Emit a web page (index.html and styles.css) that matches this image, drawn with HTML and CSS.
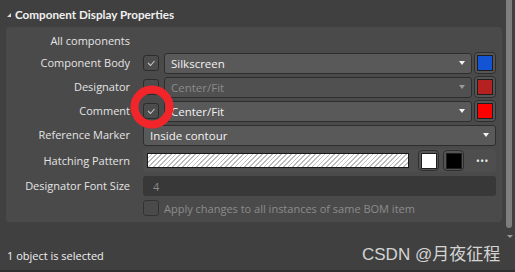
FILE: index.html
```html
<!DOCTYPE html>
<html lang="en">
<head>
    <meta charset="UTF-8">
    <title>Component Display Properties</title>
    <link rel="stylesheet" href="styles.css">
</head>
<body>
    <div class="window">
        <div class="main">
            <div class="content">
                <div class="section-title"><span class="caret"></span>Component Display Properties</div>
                <div class="panel">
                    <div class="label">All components</div>
                    <div></div>

                    <div class="label">Component Body</div>
                    <div class="controls">
                        <span class="check"><svg viewBox="0 0 14 14"><polyline points="4,7 6.5,9.5 10.5,5"/></svg></span>
                        <div class="select">Silkscreen<span class="arrow"></span></div>
                        <span class="swatch"><span class="fill blue"></span></span>
                    </div>

                    <div class="label">Designator</div>
                    <div class="controls">
                        <span class="check"></span>
                        <div class="select disabled">Center/Fit<span class="arrow"></span></div>
                        <span class="swatch"><span class="fill darkred"></span></span>
                    </div>

                    <div class="label">Comment</div>
                    <div class="controls">
                        <span class="check"><svg viewBox="0 0 14 14"><polyline points="4,7 6.5,9.5 10.5,5"/></svg></span>
                        <div class="select">Center/Fit<span class="arrow"></span></div>
                        <span class="swatch"><span class="fill red"></span></span>
                    </div>

                    <div class="label">Reference Marker</div>
                    <div class="controls">
                        <div class="select wide">Inside contour<span class="arrow"></span></div>
                    </div>

                    <div class="label">Hatching Pattern</div>
                    <div class="controls hatch-row">
                        <div class="hatch"></div>
                        <span class="swatch"><span class="fill white"></span></span>
                        <span class="swatch"><span class="fill black"></span></span>
                        <span class="dots">&bull;&bull;&bull;</span>
                    </div>

                    <div class="label">Designator Font Size</div>
                    <div class="controls">
                        <div class="input">4</div>
                    </div>

                    <div></div>
                    <div class="controls apply">
                        <span class="check"></span>
                        <span>Apply changes to all instances of same BOM item</span>
                    </div>
                </div>
            </div>
            <div class="scroll">
                <div class="thumb"></div>
                <div class="scroll-arrow"></div>
            </div>
        </div>
        <div class="status">1 object is selected</div>
        <div class="strip"></div>
        <svg class="highlight" viewBox="0 0 46 46"><circle cx="23" cy="23" r="17.5"/></svg>
        <div class="watermark">CSDN @月夜征程</div>
    </div>
</body>
</html>
```

FILE: styles.css
```css
body {
    margin: 0;
    background-color: #404040;
    font-family: "Open Sans", "Noto Sans", sans-serif;
    font-size: 11px;
    color: #e4e4e4;
}
.window {
    position: relative;
    width: 515px;
    height: 272px;
    display: flex;
    flex-direction: column;
    overflow: hidden;
}
.main {
    display: flex;
    height: 240px;
}
.content {
    flex: 1;
    padding-left: 6px;
}
.section-title {
    height: 27px;
    display: flex;
    align-items: center;
    font-family: "Lato", "Open Sans", sans-serif;
    font-weight: bold;
    font-size: 11.7px;
    color: #f0f0f0;
    margin-left: 1px;
}
.caret {
    width: 0;
    height: 0;
    border-left: 4px solid transparent;
    border-bottom: 4px solid #d8d8d8;
    margin-right: 4px;
    margin-top: 2px;
}
.panel {
    width: 496px;
    box-sizing: border-box;
    background-color: #4a4a4a;
    border-radius: 4px;
    padding: 6px 6px 6px 0;
    display: grid;
    grid-template-columns: 124px 1fr;
    column-gap: 13px;
    row-gap: 4px;
    align-items: center;
}
.label {
    text-align: right;
    white-space: nowrap;
    line-height: 16px;
}
.controls {
    display: flex;
    align-items: center;
    height: 20px;
}
.check {
    width: 14px;
    height: 14px;
    border: 1px solid #2c2c2c;
    border-radius: 3px;
    background-color: #4c4c4c;
    margin-right: 5px;
    flex: none;
    display: flex;
}
.check svg {
    width: 14px;
    height: 14px;
}
.check polyline {
    fill: none;
    stroke: #c8c8c8;
    stroke-width: 1.1;
}
.select {
    flex: 1;
    height: 19px;
    border: 1px solid #2e2e2e;
    border-radius: 3px;
    background-color: #595959;
    display: flex;
    align-items: center;
    padding-left: 6px;
    font-size: 11.5px;
    color: #f2f2f2;
}
.select.disabled {
    color: #8a8a8a;
    background-color: #505050;
}
.select.disabled .arrow {
    border-top-color: #9a9a9a;
}
.arrow {
    margin-left: auto;
    margin-right: 6px;
    width: 0;
    height: 0;
    border-left: 3.5px solid transparent;
    border-right: 3.5px solid transparent;
    border-top: 4px solid #f4f4f4;
}
.swatch {
    width: 22px;
    height: 22px;
    box-sizing: border-box;
    border: 1px solid #2e2e2e;
    border-radius: 4px;
    background-color: #555;
    margin-left: 2px;
    display: flex;
    align-items: center;
    justify-content: center;
    flex: none;
}
.fill {
    width: 16px;
    height: 16px;
    box-sizing: border-box;
    border: 1px solid #1e1e1e;
}
.blue { background-color: #1254d4; }
.darkred { background-color: #b52020; }
.red { background-color: #ff0000; }
.white { background-color: #ffffff; }
.black { background-color: #000000; }
.hatch-row {
    background-color: #4e4e4e;
    border-radius: 4px;
    padding-left: 4px;
    height: 23px;
}
.hatch-row .swatch {
    width: 21px;
    height: 21px;
    margin-left: 9px;
}
.hatch-row .swatch + .swatch {
    margin-left: 4px;
}
.hatch {
    width: 260px;
    height: 13px;
    border: 1px solid #1a1a1a;
    background: repeating-linear-gradient(135deg, #ffffff 0 2.2px, #bdbdbd 2.2px 3.4px);
}
.dots {
    margin-left: 12px;
    color: #f0f0f0;
    font-size: 10px;
    letter-spacing: 0.5px;
}
.input {
    flex: 1;
    height: 20px;
    border-radius: 3px;
    background-color: #383838;
    color: #8a8a8a;
    padding-left: 10px;
    display: flex;
    align-items: center;
}
.apply {
    height: 16px;
    color: #8c8c8c;
}
.apply .check {
    background-color: #4a4a4a;
    border-color: #333;
}
.scroll {
    width: 13px;
}
.thumb {
    width: 6px;
    height: 228px;
    margin-left: 4px;
    border-radius: 0 0 3px 3px;
    background-color: #7e7e7e;
}
.scroll-arrow {
    margin: 7px 0 0 5px;
    width: 0;
    height: 0;
    border-left: 3px solid transparent;
    border-right: 3px solid transparent;
    border-top: 3px solid #9a9a9a;
}
.status {
    height: 30px;
    padding-left: 7px;
    display: flex;
    align-items: center;
    font-size: 11px;
    color: #f0f0f0;
}
.strip {
    flex: 1;
    background-color: #2f2f2f;
}
.highlight {
    position: absolute;
    left: 129px;
    top: 84px;
    width: 46px;
    height: 46px;
}
.highlight circle {
    fill: none;
    stroke: #f2262a;
    stroke-width: 8;
}
.watermark {
    position: absolute;
    left: 362px;
    top: 240px;
    font-family: "Liberation Sans", "Noto Sans CJK SC", sans-serif;
    font-size: 17px;
    color: #d4d4d4;
}
```
